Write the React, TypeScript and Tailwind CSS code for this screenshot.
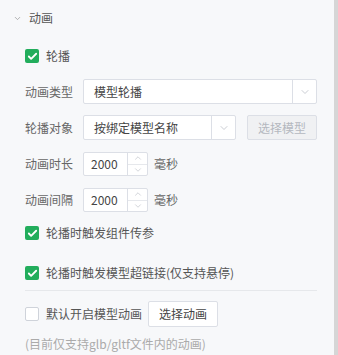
import { Check, ChevronDown, ChevronUp } from "lucide-react";

const font = { fontFamily: '"Noto Sans CJK SC", "Noto Sans", sans-serif' };

function Box({ checked, label }: { checked?: boolean; label: string }) {
  return (
    <label className="flex items-center gap-[7px] h-[20px] text-[12px] text-[#555]">
      {checked ? (
        <span className="w-[14px] h-[14px] rounded-[2px] bg-[#22ad5c] flex items-center justify-center">
          <Check className="w-[11px] h-[11px] text-white" strokeWidth={4} />
        </span>
      ) : (
        <span className="w-[14px] h-[14px] rounded-[2px] border border-[#cfd3da] bg-white" />
      )}
      {label}
    </label>
  );
}

function Select({ value, width }: { value: string; width: string }) {
  return (
    <div className={`flex h-[25px] border border-[#dcdfe6] rounded-[2px] bg-white ${width}`}>
      <div className="flex-1 flex items-center pl-[10px] text-[12px] text-[#444]">{value}</div>
      <div className="w-[24px] border-l border-[#dcdfe6] flex items-center justify-center">
        <ChevronDown className="w-[12px] h-[12px] text-[#b8bcc4]" strokeWidth={1.5} />
      </div>
    </div>
  );
}

function NumberRow({ label }: { label: string }) {
  return (
    <div className="flex items-center h-[24px]">
      <span className="w-[58px] text-[12px] text-[#666]">{label}</span>
      <div className="flex w-[65px] h-[24px] border border-[#dcdfe6] rounded-[2px] bg-white">
        <div className="flex-1 flex items-center pl-[7px] text-[12px] text-[#444]">2000</div>
        <div className="w-[20px] border-l border-[#dcdfe6] flex flex-col">
          <div className="flex-1 flex items-center justify-center border-b border-[#e6e8ec]">
            <ChevronUp className="w-[10px] h-[10px] text-[#b8bcc4]" strokeWidth={1.5} />
          </div>
          <div className="flex-1 flex items-center justify-center">
            <ChevronDown className="w-[10px] h-[10px] text-[#b8bcc4]" strokeWidth={1.5} />
          </div>
        </div>
      </div>
      <span className="ml-[6px] text-[12px] text-[#666]">毫秒</span>
    </div>
  );
}

export default function App() {
  return (
    <div className="flex w-[338px] h-[355px] bg-[#f7f8fa] overflow-hidden" style={font}>
      <div className="flex-1 flex flex-col">
        {/* Section header */}
        <div className="flex items-center h-[36px] pl-[13px] gap-[7px]">
          <ChevronDown className="w-[9px] h-[9px] text-[#999]" strokeWidth={2} />
          <span className="text-[12px] text-[#555]">动画</span>
        </div>

        <div className="flex flex-col pl-[25px] pr-[17px]">
          <div className="mt-[10px]">
            <Box checked label="轮播" />
          </div>

          <div className="flex items-center mt-[13px]">
            <span className="w-[58px] text-[12px] text-[#666]">动画类型</span>
            <Select value="模型轮播" width="flex-1" />
          </div>

          <div className="flex items-center mt-[11px]">
            <span className="w-[58px] text-[12px] text-[#666]">轮播对象</span>
            <Select value="按绑定模型名称" width="w-[153px]" />
            <button className="ml-[11px] flex-1 h-[25px] border border-[#dcdfe6] rounded-[2px] bg-[#f0f1f3] text-[12px] text-[#b4b8bf]">
              选择模型
            </button>
          </div>

          <div className="mt-[12px]">
            <NumberRow label="动画时长" />
          </div>
          <div className="mt-[12px]">
            <NumberRow label="动画间隔" />
          </div>

          <div className="mt-[11px]">
            <Box checked label="轮播时触发组件传参" />
          </div>
          <div className="mt-[20px]">
            <Box checked label="轮播时触发模型超链接(仅支持悬停)" />
          </div>

          <div className="mt-[7px] h-px bg-[#e6e8eb]" />

          <div className="flex items-center mt-[10px] gap-[6px]">
            <Box label="默认开启模型动画" />
            <button className="w-[70px] h-[26px] border border-[#dcdfe6] rounded-[2px] bg-white text-[12px] text-[#444]">
              选择动画
            </button>
          </div>

          <div className="mt-[9px] text-[12px] text-[#aaa] leading-[16px]">
            (目前仅支持glb/gltf文件内的动画)
          </div>
        </div>
      </div>
      <div className="w-[4px] bg-[#d6d6d6]" />
    </div>
  );
}
